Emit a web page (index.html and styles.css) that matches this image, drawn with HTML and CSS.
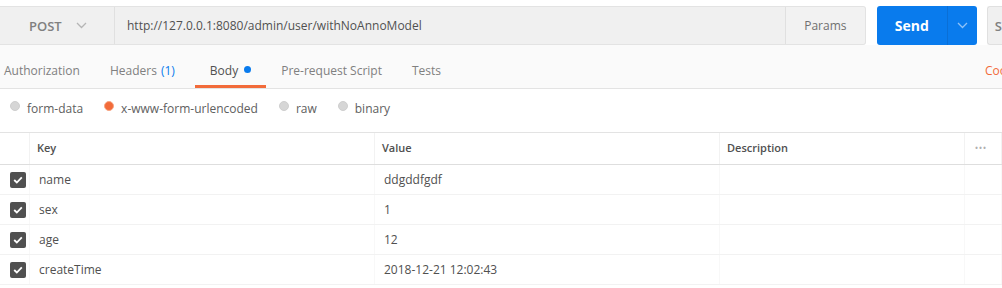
FILE: index.html
```html
<!DOCTYPE html>
<html>
<head>
<meta charset="utf-8">
<link rel="stylesheet" href="styles.css">
</head>
<body>
<div class="top">
  <div class="urlgroup">
    <div class="method">POST
      <svg class="chev" width="11" height="7" viewBox="0 0 11 7"><polyline points="1,1 5.5,5.5 10,1" fill="none" stroke="#b5b5b5" stroke-width="1.3"/></svg>
    </div>
    <div class="url">http://127.0.0.1:8080/admin/user/withNoAnnoModel</div>
    <div class="params">Params</div>
  </div>
  <div class="send">
    <span class="send-label">Send</span>
    <span class="send-drop"><svg width="11" height="7" viewBox="0 0 11 7"><polyline points="1,1 5.5,5.5 10,1" fill="none" stroke="#8fc2f7" stroke-width="1.3"/></svg></span>
  </div>
  <div class="save">S</div>
</div>
<div class="tabs">
  <div class="tab first">Authorization</div>
  <div class="tab">Headers <span class="count">(1)</span></div>
  <div class="tab active">Body<span class="dot"></span></div>
  <div class="tab">Pre-request Script</div>
  <div class="tab">Tests</div>
  <div class="spacer"></div>
  <div class="cookies">Coo</div>
</div>
<div class="radios">
  <label class="radio"><span class="circle"></span>form-data</label>
  <label class="radio"><span class="circle on"></span>x-www-form-urlencoded</label>
  <label class="radio"><span class="circle"></span>raw</label>
  <label class="radio"><span class="circle"></span>binary</label>
</div>
<div class="table">
  <div class="row head">
    <div class="cell chk"></div>
    <div class="cell">Key</div>
    <div class="cell">Value</div>
    <div class="cell">Description</div>
    <div class="cell more">&bull;&bull;&bull;</div>
  </div>
  <div class="row">
    <div class="cell chk"><span class="box"><svg width="10" height="8" viewBox="0 0 10 8"><polyline points="1.2,4 3.8,6.5 8.8,1.3" fill="none" stroke="#fff" stroke-width="1.8"/></svg></span></div>
    <div class="cell key">name</div>
    <div class="cell val">ddgddfgdf</div>
    <div class="cell"></div>
    <div class="cell"></div>
  </div>
  <div class="row">
    <div class="cell chk"><span class="box"><svg width="10" height="8" viewBox="0 0 10 8"><polyline points="1.2,4 3.8,6.5 8.8,1.3" fill="none" stroke="#fff" stroke-width="1.8"/></svg></span></div>
    <div class="cell key">sex</div>
    <div class="cell val">1</div>
    <div class="cell"></div>
    <div class="cell"></div>
  </div>
  <div class="row">
    <div class="cell chk"><span class="box"><svg width="10" height="8" viewBox="0 0 10 8"><polyline points="1.2,4 3.8,6.5 8.8,1.3" fill="none" stroke="#fff" stroke-width="1.8"/></svg></span></div>
    <div class="cell key">age</div>
    <div class="cell val">12</div>
    <div class="cell"></div>
    <div class="cell"></div>
  </div>
  <div class="row">
    <div class="cell chk"><span class="box"><svg width="10" height="8" viewBox="0 0 10 8"><polyline points="1.2,4 3.8,6.5 8.8,1.3" fill="none" stroke="#fff" stroke-width="1.8"/></svg></span></div>
    <div class="cell key">createTime</div>
    <div class="cell val">2018-12-21 12:02:43</div>
    <div class="cell"></div>
    <div class="cell"></div>
  </div>
</div>
</body>
</html>
```
FILE: styles.css
```css
html, body {
  margin: 0;
  padding: 0;
  background: #fff;
  font-family: "Open Sans", "Liberation Sans", sans-serif;
  font-size: 12px;
  color: #505050;
  overflow: hidden;
  width: 1002px;
  height: 288px;
}

.top {
  display: flex;
  align-items: stretch;
  height: 39px;
  padding-top: 6px;
  background: #fff;
}

.urlgroup {
  display: flex;
  width: 866px;
  background: #f0f0f0;
  border: 1px solid #e3e3e3;
  border-left: none;
  border-radius: 0 3px 3px 0;
  box-sizing: border-box;
}

.method {
  width: 115px;
  box-sizing: border-box;
  border-right: 1px solid #e0e0e0;
  display: flex;
  align-items: center;
  padding-left: 29px;
  font-size: 13px;
  font-weight: 600;
  color: #808080;
}

.method .chev {
  margin-left: 14px;
}

.url {
  flex: 1;
  display: flex;
  align-items: center;
  padding-left: 12px;
  color: #505050;
}

.params {
  width: 80px;
  box-sizing: border-box;
  border-left: 1px solid #e0e0e0;
  display: flex;
  align-items: center;
  justify-content: center;
  font-size: 12px;
  color: #707070;
  background: #f2f2f2;
  border-radius: 0 3px 3px 0;
}

.send {
  margin-left: 11px;
  width: 100px;
  display: flex;
  background: #097bed;
  border-radius: 3px;
  color: #fff;
}

.send-label {
  width: 70px;
  display: flex;
  align-items: center;
  justify-content: center;
  font-weight: 700;
  font-size: 14px;
  border-right: 1px solid #0a6fd6;
}

.send-drop {
  flex: 1;
  display: flex;
  align-items: center;
  justify-content: center;
}

.save {
  margin-left: 10px;
  flex: 1;
  background: #f0f0f0;
  border: 1px solid #e0e0e0;
  border-right: none;
  border-radius: 3px 0 0 3px;
  display: flex;
  align-items: center;
  padding-left: 7px;
  font-size: 13px;
  font-weight: 600;
  color: #808080;
}

.tabs {
  display: flex;
  align-items: stretch;
  height: 43px;
  background: #fafafa;
  border-bottom: 1px solid #e3e3e3;
}

.tab {
  display: flex;
  align-items: center;
  padding: 11px 15px 0;
  color: #808080;
  border-bottom: 3px solid transparent;
  white-space: nowrap;
}

.tab.first {
  margin-left: -11px;
}

.tab.active {
  color: #505050;
  border-bottom-color: #f26b3a;
}

.count {
  color: #097bed;
  margin-left: 4px;
  margin-right: 5px;
}

.dot {
  display: inline-block;
  width: 7px;
  height: 7px;
  border-radius: 50%;
  background: #097bed;
  margin-left: 6px;
  margin-top: -2px;
}

.spacer {
  flex: 1;
}

.cookies {
  display: flex;
  align-items: center;
  padding-top: 11px;
  padding-bottom: 3px;
  color: #f26b3a;
  width: 17px;
  overflow: hidden;
  white-space: nowrap;
}

.radios {
  display: flex;
  align-items: center;
  height: 43px;
  box-sizing: border-box;
  padding-left: 10px;
  padding-bottom: 4px;
  gap: 21px;
}

.radio {
  display: flex;
  align-items: center;
  color: #606060;
}

.circle {
  width: 10px;
  height: 10px;
  border-radius: 50%;
  background: #d6d6d6;
  box-sizing: border-box;
  border: 1px solid #cfcfcf;
  margin-right: 7px;
  margin-top: -5px;
}

.circle.on {
  background: #f26b3a;
  border-color: #f7a583;
}

.table {
  border-top: 1px solid #e3e3e3;
}

.row {
  display: grid;
  grid-template-columns: 30px 345px 345px 245px 37px;
  height: 30px;
  border-bottom: 1px solid #f2f2f2;
  box-sizing: border-box;
}

.row.head {
  height: 32px;
  border-bottom: 1px solid #dedede;
}

.cell {
  display: flex;
  align-items: center;
  border-right: 1px solid #f8f8f8;
  padding-left: 9px;
  white-space: nowrap;
  overflow: hidden;
}

.head .cell {
  font-size: 11px;
  font-weight: 600;
  color: #505050;
  padding-left: 7px;
  padding-bottom: 2px;
  border-right-color: #f2f2f2;
}

.head .cell.more {
  color: #b0b0b0;
  font-size: 8px;
  letter-spacing: 1px;
  padding-left: 10px;
}

.cell.chk {
  padding-left: 10px;
}

.cell.val {
  padding-left: 9px;
}

.box {
  width: 16px;
  height: 16px;
  border-radius: 2px;
  background: #505050;
  display: flex;
  align-items: center;
  justify-content: center;
  margin-top: 1px;
}
```
